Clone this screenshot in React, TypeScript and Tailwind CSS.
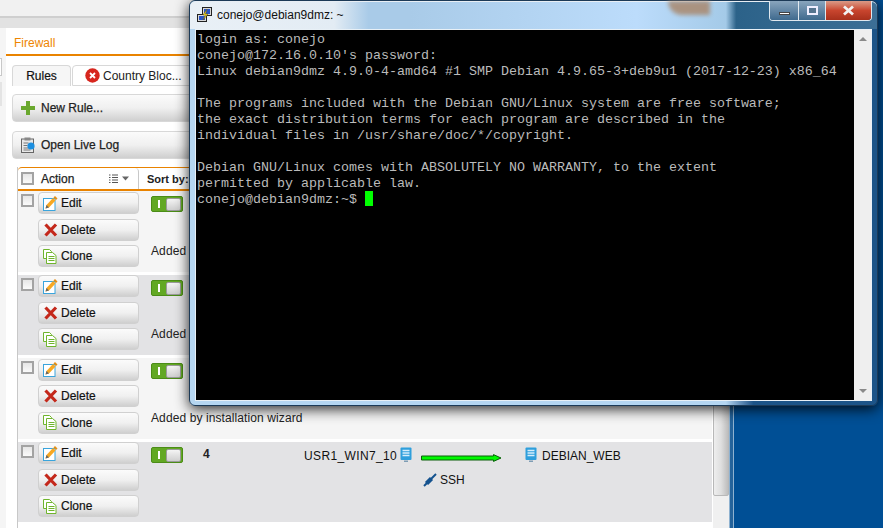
import React from "react";

const EditIcon = () => (
  <svg width="15" height="15" viewBox="0 0 15 15" className="shrink-0">
    <rect x="0.5" y="2.5" width="11.5" height="12" fill="#fff" stroke="#3aa4dc" />
    <path d="M2.5 12.5l1-3.5 6.5-7 2.5 2.5-6.5 7z" fill="#f7a823" />
    <path d="M2.5 12.5l1-3.5 2.5 2.5z" fill="#666" />
    <path d="M10.5 1.5l1.5-1.5 2.5 2.5-1.5 1.5z" fill="#e58e12" />
  </svg>
);
const DeleteIcon = () => (
  <svg width="15" height="14" viewBox="0 0 15 14" className="shrink-0">
    <path d="M2.5 1.5L13 12.5M13 1.5L2.5 12.5" stroke="#c4281b" strokeWidth="3.2" />
  </svg>
);
const CloneIcon = () => (
  <svg width="15" height="15" viewBox="0 0 15 15" className="shrink-0" fill="#fff" stroke="#6fb52c">
    <path d="M0.5 0.5h6l2 2v7h-8z" />
    <path d="M3.5 3.5h6l3.5 3v8h-9.5z" />
    <path d="M5.5 7.5h6M5.5 9.5h6M5.5 11.5h6" />
  </svg>
);
const ServerIcon = () => (
  <svg width="12" height="16" viewBox="0 0 12 16" className="shrink-0">
    <rect x="0.5" y="0.5" width="11" height="12.5" rx="1" fill="#2f9fdc" />
    <path d="M2.5 3.5h7M2.5 6h7M2.5 8.5h7" stroke="#d5eefb" strokeWidth="1.4" />
    <path d="M4 13.5h4v1.5H4z" fill="#7e9db4" />
  </svg>
);
const Arrow = () => (
  <svg width="81" height="8" viewBox="0 0 81 8" className="shrink-0">
    <path d="M0.5 2h72V0.6L80 4l-7.5 3.4V6H0.5z" fill="#00f800" stroke="#0a5f0a" strokeWidth="1" />
  </svg>
);
const PlugIcon = () => (
  <svg width="14" height="14" viewBox="0 0 14 14" className="shrink-0">
    <path d="M1 13L13 1" stroke="#14528e" strokeWidth="2" />
    <path d="M3.5 10.5l5-5" stroke="#14528e" strokeWidth="4.4" />
  </svg>
);

const Btn = ({ icon, label }: { icon: React.ReactNode; label: string }) => (
  <div className="w-[101px] h-[22px] flex items-center gap-[3px] pl-[4px] rounded-[4px] border border-[#d0d0d0] bg-gradient-to-b from-[#fbfbfb] via-[#f0f0f0] to-[#cfcfcf] text-[12px] text-[#111] [-webkit-text-stroke:0.2px_#111]">
    {icon}
    <span>{label}</span>
  </div>
);

const Toggle = () => (
  <div className="w-[32px] h-[16px] rounded-[2px] bg-[#62a823] border border-[#4b8c17] flex items-center pl-[6px] pr-[1px] justify-between shrink-0">
    <div className="w-[2px] h-[8px] bg-white" />
    <div className="w-[15px] h-[13px] rounded-[2px] bg-gradient-to-b from-[#f4f4f4] to-[#cfcfcf] border border-[#9a9a9a]" />
  </div>
);

const Check = () => (
  <div className="w-[13px] h-[13px] border-2 border-[#a3a3a3] bg-gradient-to-b from-[#e6e6e6] to-[#fafafa] shrink-0" />
);

const Row = ({
  bg,
  note,
  number,
  h,
  noteTop,
  btnPad,
  children,
}: {
  bg: string;
  note?: string;
  number?: string;
  h: string;
  noteTop?: string;
  btnPad: string;
  children?: React.ReactNode;
}) => (
  <div className={`flex pl-[3px] mb-[3px] mr-[1px] ${bg} ${h}`}>
    <div className="pt-[3px] w-[17px] shrink-0"><Check /></div>
    <div className={`flex flex-col gap-[4.5px] w-[101px] shrink-0 ${btnPad}`}>
      <Btn icon={<EditIcon />} label="Edit" />
      <Btn icon={<DeleteIcon />} label="Delete" />
      <Btn icon={<CloneIcon />} label="Clone" />
    </div>
    <div className="pl-[12px] pt-[5px] flex-1 relative">
      <div className="flex items-start">
        <Toggle />
        {number && <span className="ml-[20px] text-[12px] font-bold text-[#222] leading-[14px]">{number}</span>}
        {children}
      </div>
      {note && <div className={`${noteTop} text-[12px] tracking-[0.1px] text-[#222]`}>{note}</div>}
    </div>
  </div>
);

export default function App() {
  return (
    <div className="w-[883px] h-[528px] relative overflow-hidden flex bg-[#004f95] font-['Liberation_Sans',Arial,sans-serif]">
      {/* browser / app */}
      <div className="w-[729px] h-full flex flex-col bg-[#f5f5f5] shrink-0">
        <div className="h-[18px] bg-[#f1f1f1] border-b-2 border-[#cfcfcf] shrink-0" />
        <div className="h-[10px] bg-[#e2e2e2] shrink-0" />
        <div className="flex flex-1 min-h-0">
          <div className="w-[6px] shrink-0 flex flex-col pt-[30px]">
            <div className="w-[2px] h-[18px] border border-l-0 border-[#c8c8c8] bg-white" />
            <div className="w-[2px] h-[24px] mt-[6px] bg-[#e4e4e4]" />
          </div>
          <div className="flex-1 bg-white flex flex-col min-h-0">
            <div className="h-[28px] border-b-2 border-[#e98300] pl-[8px] pt-[8px] text-[12px] text-[#ee8500] shrink-0 leading-[15px]">Firewall</div>
            <div className="flex items-end gap-[1px] pl-[6px] mt-[9px] shrink-0">
              <div className="w-[59px] h-[21px] rounded-t-[4px] border border-b-0 border-[#d8d8d8] bg-[#f6f6f6] flex items-center justify-center text-[12px] text-[#111] [-webkit-text-stroke:0.2px_#111]">Rules</div>
              <div className="w-[120px] h-[21px] rounded-t-[4px] border border-[#d8d8d8] bg-[#fff] flex items-center pl-[12px] gap-[3px] text-[12px] text-[#222]">
                <svg width="15" height="15" viewBox="0 0 15 15" className="shrink-0">
                  <circle cx="7.5" cy="7.5" r="7.2" fill="#d7261e" />
                  <path d="M5 5l5 5M10 5l-5 5" stroke="#fff" strokeWidth="1.8" />
                </svg>
                <span>Country Bloc...</span>
              </div>
            </div>
            <div className="ml-[6px] mt-[8px] h-[28px] w-[300px] shrink-0 rounded-[4px] border border-[#d8d8d8] bg-gradient-to-b from-[#fbfbfb] via-[#f0f0f0] to-[#cfcfcf] flex items-center pl-[8px] gap-[6px] text-[12px] text-[#222]">
              <svg width="14" height="14" viewBox="0 0 14 14" className="shrink-0">
                <path d="M5 0h4v5h5v4H9v5H5V9H0V5h5z" fill="#6aa82e" />
              </svg>
              <span className="[-webkit-text-stroke:0.25px_#222]">New Rule...</span>
            </div>
            <div className="ml-[6px] mt-[9px] h-[28px] w-[300px] shrink-0 rounded-[4px] border border-[#d8d8d8] bg-gradient-to-b from-[#fbfbfb] via-[#f0f0f0] to-[#cfcfcf] flex items-center pl-[8px] gap-[5px] text-[12px] text-[#222]">
              <svg width="15" height="16" viewBox="0 0 15 16" className="shrink-0">
                <rect x="0.5" y="2" width="12" height="13.5" fill="#e8e8e8" stroke="#666" />
                <rect x="3.5" y="0.5" width="6" height="3" fill="#888" />
                <path d="M2.5 6h5M2.5 8.5h4M2.5 11h5M2.5 13h7" stroke="#777" />
                <circle cx="10" cy="9" r="3.6" fill="#1c8fe0" />
              </svg>
              <span className="[-webkit-text-stroke:0.25px_#222]">Open Live Log</span>
            </div>
            <div className="flex flex-1 min-h-0 ml-[11px] mt-[8px]">
              <div className="w-[696px] shrink-0 border-l border-[#c8c8c8] flex flex-col">
                <div className="h-[24px] shrink-0 flex border-b-2 border-[#e98300] rounded-t-[4px] border-t border-[#d4d4d4]">
                  <div className="w-[121px] flex items-center pl-[3px] border-r border-[#c8c8c8] rounded-tr-[4px]">
                    <Check />
                    <span className="ml-[7px] text-[12px] text-[#222] [-webkit-text-stroke:0.25px_#222]">Action</span>
                    <svg width="21" height="10" viewBox="0 0 21 10" className="ml-[35px] shrink-0">
                      <path d="M0 1h1.5M3 1h6M0 3.5h1.5M3 3.5h6M0 6h1.5M3 6h6M0 8.5h1.5M3 8.5h6" stroke="#555" />
                      <path d="M13 2.5h7l-3.5 4z" fill="#666" />
                    </svg>
                  </div>
                  <div className="pl-[8px] pt-[3px] text-[11px] font-bold text-[#222]">Sort by:</div>
                </div>
                <Row bg="bg-[#f5f5f5]" h="h-[81px]" btnPad="pt-[1px]" note="Added by installation wizard" noteTop="mt-[30px]" />
                <Row bg="bg-[#e3e3e5]" h="h-[80px]" btnPad="pt-0" note="Added by installation wizard" noteTop="mt-[29px]" />
                <Row bg="bg-[#f5f5f5]" h="h-[81px]" btnPad="pt-[0.5px]" note="Added by installation wizard" noteTop="mt-[30px]" />
                <Row bg="bg-[#e3e3e5]" h="h-[80px]" btnPad="pt-0" number="4">
                  <div className="absolute left-[165px] top-[5px] w-[93px] text-right text-[12px] tracking-[0.35px] text-[#111] whitespace-nowrap">USR1_WIN7_10</div>
                  <div className="absolute left-[261px] top-[5px]"><ServerIcon /></div>
                  <div className="absolute left-[282px] top-[12px]"><Arrow /></div>
                  <div className="absolute left-[386px] top-[5px]"><ServerIcon /></div>
                  <div className="absolute left-[403px] top-[5px] text-[12px] text-[#111] whitespace-nowrap">DEBIAN_WEB</div>
                  <div className="absolute left-[284px] top-[29px] flex items-center gap-[3px] text-[12px] text-[#111]"><PlugIcon />SSH</div>
                </Row>
              </div>
              <div className="w-[16px] shrink-0 flex flex-col bg-[#f0f0f0]">
                <div className="h-[329px] shrink-0 rounded-b-[2px] border border-[#b8b8b8] bg-gradient-to-r from-[#eeeeee] via-[#dfdfdf] to-[#bdbdbd]" />
              </div>
            </div>
          </div>
        </div>
      </div>
      {/* desktop */}
      <div className="w-[5px] h-full bg-[#24639b] border-x border-x-[#8fb2d0] shrink-0" />
      <div className="flex-1 h-full bg-[#004f95]" />

      {/* terminal window */}
      <div className="absolute left-[189px] top-0 w-[689px] h-[406px] rounded-[6px] border border-[#1c3a57] bg-gradient-to-r from-[#b5d6f1] via-[#b5d6f1] via-[78%] to-[#1c5488] to-[82%] shadow-[0_3px_14px_rgba(0,0,0,0.85)] flex flex-col">
        <div className="absolute left-0 top-0 right-0 h-[28px] rounded-t-[6px] border-t border-[#e8eef4] bg-[linear-gradient(to_right,#e9f0f6_0%,#e3ecf4_21%,#a9cbe8_26%,#a9cbe8_32%,#bcdcfb_65%,#a4cae8_78%,#2c6289_79.5%,#3c6f96_100%)]" />
        <div className="absolute left-[478px] top-0 w-[42px] h-[14px] bg-[#a98465] rounded-bl-[14px] blur-[2px] opacity-80" />
        <div className="relative h-[28px] shrink-0 flex items-center pl-[7px]">
          <svg width="16" height="17" viewBox="0 0 16 17" className="shrink-0">
            <rect x="5.5" y="0.5" width="9" height="8" fill="#d8d8d8" stroke="#222" />
            <rect x="7" y="2" width="6" height="5" fill="#2a55c8" />
            <rect x="0.5" y="7.5" width="9" height="7" fill="#d8d8d8" stroke="#222" />
            <rect x="2" y="9" width="6" height="4" fill="#2a55c8" />
            <path d="M10 2L6 8l2.5 0L6 13l5-6H8.5z" fill="#f8dc2c" stroke="#6a5a00" strokeWidth="0.5" />
          </svg>
          <span className="ml-[4px] text-[12px] text-[#111]">conejo@debian9dmz: ~</span>
          <div className="absolute right-[5px] top-0 h-[20px] w-[103px] flex rounded-b-[4px] border border-t-0 border-[#dfe8ef] overflow-hidden">
            <div className="w-[29px] border-r border-[#dfe8ef] bg-gradient-to-b from-[#89a5bd] to-[#3f6a8e] flex items-center justify-center pt-[5px]">
              <div className="w-[11px] h-[3px] bg-white border border-[#444]" />
            </div>
            <div className="w-[27px] border-r border-[#dfe8ef] bg-gradient-to-b from-[#89a5bd] to-[#3f6a8e] flex items-center justify-center">
              <div className="w-[11px] h-[9px] border-2 border-[#eef] bg-[#55748f]" />
            </div>
            <div className="flex-1 bg-gradient-to-b from-[#d99a87] via-[#c8452e] to-[#a8301c] flex items-center justify-center">
              <svg width="13" height="11" viewBox="0 0 13 11">
                <path d="M2 1.5L11 9.5M11 1.5L2 9.5" stroke="#f2f2f2" strokeWidth="2.8" />
              </svg>
            </div>
          </div>
        </div>
        <div className="relative flex-1 mx-[5px] mb-[4px] flex border border-[#e8f0f6] min-h-0">
          <div className="flex-1 bg-black pl-[1px] pt-[2px] font-['Liberation_Mono','Courier_New',monospace] text-[13.33px] leading-[16px] text-[#bbbbbb] whitespace-pre">
            {`login as: conejo
conejo@172.16.0.10's password:
Linux debian9dmz 4.9.0-4-amd64 #1 SMP Debian 4.9.65-3+deb9u1 (2017-12-23) x86_64

The programs included with the Debian GNU/Linux system are free software;
the exact distribution terms for each program are described in the
individual files in /usr/share/doc/*/copyright.

Debian GNU/Linux comes with ABSOLUTELY NO WARRANTY, to the extent
permitted by applicable law.
conejo@debian9dmz:~$ `}
            <span className="inline-block w-[8px] h-[15px] bg-[#00ff00] align-[-1px] my-[-2px]" />
          </div>
          <div className="w-[17px] shrink-0 bg-[#efefef] flex flex-col justify-between items-center py-[7px]">
            <div className="w-0 h-0 border-x-[4px] border-x-transparent border-b-[4px] border-b-[#8a8a8a]" />
            <div className="w-0 h-0 border-x-[4px] border-x-transparent border-t-[4px] border-t-[#8a8a8a]" />
          </div>
        </div>
      </div>
    </div>
  );
}
